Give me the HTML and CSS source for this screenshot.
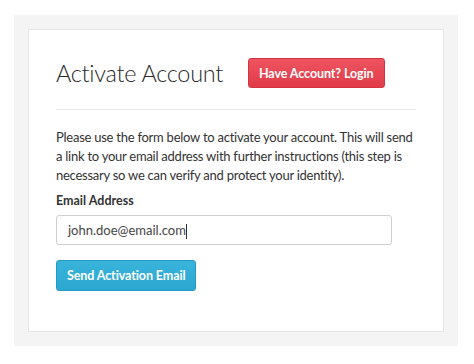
FILE: index.html
```html
<!DOCTYPE html>
<html lang="en">
<head>
    <meta charset="UTF-8">
    <meta name="viewport" content="width=device-width, initial-scale=1.0">
    <title>Activate Account</title>
    <link rel="stylesheet" href="styles.css">
</head>
<body>
    <div class="wrapper">
        <div class="card">
            <div class="card-header">
                <h1>Activate Account</h1>
                <button class="btn btn-red">Have Account? Login</button>
            </div>
            <p class="intro">Please use the form below to activate your account. This will send a link to your email address with further instructions (this step is necessary so we can verify and protect your identity).</p>
            <label for="email">Email Address</label>
            <div class="input-box" id="email">john.doe@email.com<span class="caret"></span></div>
            <button class="btn btn-blue">Send Activation Email</button>
        </div>
    </div>
</body>
</html>
```

FILE: styles.css
```css
body {
    margin: 0;
    padding: 15px 16px 18px 14px;
    font-family: Lato, sans-serif;
    background-color: #fff;
    color: #333;
}

.wrapper {
    background-color: #f4f4f4;
    padding: 14px;
}

.card {
    background-color: #fff;
    border: 1px solid #e6e6e6;
    padding: 28px 27px 0 27px;
    box-sizing: border-box;
    height: 303px;
}

.card-header {
    display: flex;
    align-items: center;
    gap: 25px;
    width: 360px;
    padding-bottom: 21px;
    border-bottom: 1px solid #eaeaea;
    margin-bottom: 18px;
}

h1 {
    margin: 0;
    font-family: Lato, sans-serif;
    font-weight: 300;
    font-size: 23.5px;
    letter-spacing: -0.3px;
    white-space: nowrap;
    color: #2a2a2a;
}

.btn {
    flex: none;
    border: none;
    border-radius: 3px;
    color: #fff;
    font-family: Lato, sans-serif;
    font-weight: 700;
    font-size: 12.5px;
    letter-spacing: -0.1px;
    white-space: nowrap;
    cursor: pointer;
}

.btn-red {
    background: linear-gradient(#ee5460, #e03b48);
    border: 1px solid #d33441;
    padding: 0 10px;
    height: 30px;
}

.intro {
    width: 361px;
    margin: 0 0 7px 0;
    font-size: 13px;
    letter-spacing: -0.25px;
    line-height: 19px;
}

label {
    display: block;
    font-weight: 700;
    font-size: 12.5px;
    line-height: 18px;
    margin-bottom: 5px;
}

.input-box {
    width: 336px;
    height: 30px;
    box-sizing: border-box;
    border: 1px solid #cfcfcf;
    border-radius: 3px;
    padding: 0 11px;
    font-size: 13px;
    line-height: 28px;
    color: #444;
    margin-bottom: 15px;
}

.caret {
    display: inline-block;
    width: 1px;
    height: 15px;
    background-color: #333;
    vertical-align: middle;
}

.btn-blue {
    background: linear-gradient(#39b5dc, #2ba6d0);
    border: 1px solid #2398c2;
    padding: 0 10px;
    height: 31px;
}
```
